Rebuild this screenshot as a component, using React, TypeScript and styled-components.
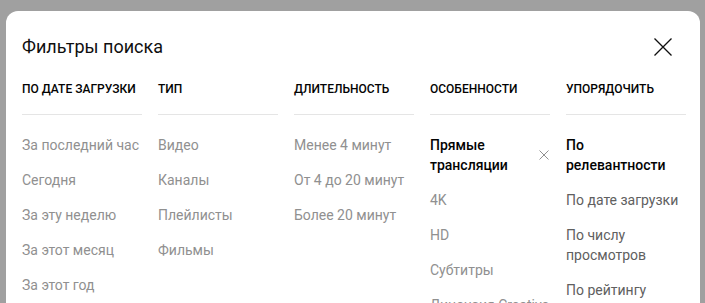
import React from "react";
import styled, { createGlobalStyle } from "styled-components";

const Global = createGlobalStyle`
  html, body { margin: 0; padding: 0; background: #a0a0a0; overflow: hidden; }
  body { font-family: Roboto, "Noto Sans", Arial, sans-serif; }
`;

const Page = styled.div`
  padding: 11px 5px 0 6px;
  height: 303px;
  box-sizing: border-box;
`;

const Dialog = styled.div`
  width: 694px;
  background: #fff;
  border-radius: 12px;
  padding: 24px 16px 0 16px;
  box-sizing: border-box;
  min-height: 400px;
`;

const TitleBar = styled.div`
  display: flex;
  align-items: center;
  justify-content: space-between;
`;

const Title = styled.h2`
  margin: 0;
  font-size: 18px;
  line-height: 24px;
  font-weight: 400;
  color: #0f0f0f;
`;

const CloseButton = styled.button`
  border: 0;
  background: none;
  padding: 0;
  margin-right: 12px;
  width: 18px;
  height: 18px;
  display: flex;
  cursor: pointer;
`;

const Columns = styled.div`
  display: grid;
  grid-template-columns: repeat(5, 120px);
  column-gap: 16px;
  margin-top: 22px;
`;

const Group = styled.div`
  display: flex;
  flex-direction: column;
`;

const Header = styled.h4`
  margin: 0;
  font-size: 12px;
  line-height: 16px;
  font-weight: 500;
  text-transform: uppercase;
  color: #030303;
  padding-bottom: 17px;
  border-bottom: 1px solid #e5e5e5;
  margin-bottom: 20px;
  white-space: nowrap;
`;

const Item = styled.div<{ $tone: "muted" | "normal" | "selected" }>`
  display: flex;
  align-items: center;
  justify-content: space-between;
  gap: 4px;
  font-size: 14px;
  line-height: 20px;
  margin-bottom: 15px;
  font-weight: ${(p) => (p.$tone === "selected" ? 500 : 400)};
  color: ${(p) =>
    p.$tone === "selected" ? "#030303" : p.$tone === "normal" ? "#606060" : "#909090"};
`;

const SmallX = styled.span`
  display: flex;
  flex: none;
  margin-right: 1px;
`;

type Entry = { label: string; tone: "muted" | "normal" | "selected"; removable?: boolean };
type GroupData = { title: string; items: Entry[] };

const groups: GroupData[] = [
  {
    title: "По дате загрузки",
    items: [
      { label: "За последний час", tone: "muted" },
      { label: "Сегодня", tone: "muted" },
      { label: "За эту неделю", tone: "muted" },
      { label: "За этот месяц", tone: "muted" },
      { label: "За этот год", tone: "muted" },
    ],
  },
  {
    title: "Тип",
    items: [
      { label: "Видео", tone: "muted" },
      { label: "Каналы", tone: "muted" },
      { label: "Плейлисты", tone: "muted" },
      { label: "Фильмы", tone: "muted" },
    ],
  },
  {
    title: "Длительность",
    items: [
      { label: "Менее 4 минут", tone: "muted" },
      { label: "От 4 до 20 минут", tone: "muted" },
      { label: "Более 20 минут", tone: "muted" },
    ],
  },
  {
    title: "Особенности",
    items: [
      { label: "Прямые трансляции", tone: "selected", removable: true },
      { label: "4K", tone: "muted" },
      { label: "HD", tone: "muted" },
      { label: "Субтитры", tone: "muted" },
      { label: "Лицензия Creative Commons", tone: "muted" },
    ],
  },
  {
    title: "Упорядочить",
    items: [
      { label: "По релевантности", tone: "selected" },
      { label: "По дате загрузки", tone: "normal" },
      { label: "По числу просмотров", tone: "normal" },
      { label: "По рейтингу", tone: "normal" },
    ],
  },
];

export default function App() {
  return (
    <>
      <Global />
      <Page>
        <Dialog>
          <TitleBar>
            <Title>Фильтры поиска</Title>
            <CloseButton aria-label="Закрыть">
              <svg width="18" height="18" viewBox="0 0 18 18">
                <path d="M0.5 0.5 L17.5 17.5 M17.5 0.5 L0.5 17.5" stroke="#0f0f0f" strokeWidth="1.3" fill="none" />
              </svg>
            </CloseButton>
          </TitleBar>
          <Columns>
            {groups.map((g) => (
              <Group key={g.title}>
                <Header>{g.title}</Header>
                {g.items.map((it) => (
                  <Item key={it.label} $tone={it.tone}>
                    <span>{it.label}</span>
                    {it.removable && (
                      <SmallX>
                        <svg width="10" height="10" viewBox="0 0 10 10">
                          <path d="M0.5 0.5 L9.5 9.5 M9.5 0.5 L0.5 9.5" stroke="#909090" strokeWidth="1" fill="none" />
                        </svg>
                      </SmallX>
                    )}
                  </Item>
                ))}
              </Group>
            ))}
          </Columns>
        </Dialog>
      </Page>
    </>
  );
}
